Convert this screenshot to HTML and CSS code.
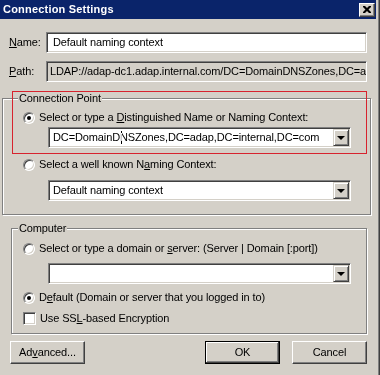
FILE: index.html
```html
<!DOCTYPE html>
<html>
<head>
<meta charset="utf-8">
<link rel="stylesheet" href="styles.css">
</head>
<body>
<div class="window">
  <div class="titlebar">
    <span class="title">Connection Settings</span>
    <span class="close"><svg width="8" height="7" viewBox="0 0 8 7"><path d="M0 0h2l2 2 2-2h2v1l-2.5 2.5 2.5 2.5v1h-2l-2-2-2 2h-2v-1l2.5-2.5-2.5-2.5z" fill="#000"/></svg></span>
  </div>
  <div class="client">
    <div class="field-row">
      <label class="lbl"><u>N</u>ame:</label>
      <div class="edit name-edit">Default naming context</div>
    </div>
    <div class="field-row path-row">
      <label class="lbl"><u>P</u>ath:</label>
      <div class="edit disabled">LDAP://adap-dc1.adap.internal.com/DC=DomainDNSZones,DC=adap,DC=internal,DC=com</div>
    </div>

    <fieldset class="group g1">
      <legend>Connection Point</legend>
      <div class="group-body">
        <div class="option"><span class="radio checked"></span><span>Select or type a <u>D</u>istinguished Name or Naming Context:</span></div>
        <div class="combo first-combo"><span class="combo-text">DC=DomainD<span class="cursor-n">N</span>SZones,DC=adap,DC=internal,DC=com</span><span class="drop"><span class="arrow"></span></span></div>
        <div class="option gap"><span class="radio"></span><span>Select a well known N<u>a</u>ming Context:</span></div>
        <div class="combo combo-b"><span class="combo-text">Default naming context</span><span class="drop"><span class="arrow"></span></span></div>
      </div>
    </fieldset>

    <fieldset class="group g2">
      <legend>Computer</legend>
      <div class="group-body body2">
        <div class="option"><span class="radio"></span><span>Select or type a domain or <u>s</u>erver: (Server | Domain [:port])</span></div>
        <div class="combo combo-c"><span class="combo-text"></span><span class="drop"><span class="arrow"></span></span></div>
        <div class="option gap2"><span class="radio checked"></span><span>D<u>e</u>fault (Domain or server that you logged in to)</span></div>
        <div class="option gap3"><span class="check"></span><span>Use SS<u>L</u>-based Encryption</span></div>
      </div>
    </fieldset>

    <div class="buttons">
      <div class="btn">Ad<u>v</u>anced...</div>
      <div class="btn default ok">OK</div>
      <div class="btn cancel">Cancel</div>
    </div>
  </div>
  <div class="redbox"></div>
</div>
</body>
</html>
```
FILE: styles.css
```css
* { box-sizing: border-box; }
html, body { margin: 0; padding: 0; }
body {
  width: 380px;
  height: 375px;
  overflow: hidden;
  background: #d4d0c8;
  font-family: "Liberation Sans", Arial, sans-serif;
  font-size: 11px;
  line-height: 13px;
  letter-spacing: -0.12px;
  color: #000;
}
u { text-decoration: underline; text-underline-offset: 1px; }

.window {
  position: relative;
  width: 380px;
  height: 375px;
  padding-right: 4px;
  display: flex;
  flex-direction: column;
  box-shadow: inset -1px 0 0 #404040, inset -2px 0 0 #808080;
}

.titlebar {
  height: 19px;
  background: #0a246a;
  color: #fff;
  font-weight: bold;
  letter-spacing: 0.2px;
  display: flex;
  align-items: center;
  justify-content: space-between;
  padding: 0 1px 0 3px;
}
.close {
  width: 16px;
  height: 14px;
  background: #d4d0c8;
  border: 1px solid;
  border-color: #fff #404040 #404040 #fff;
  box-shadow: inset -1px -1px 0 #808080;
  display: flex;
  align-items: center;
  justify-content: center;
  padding-bottom: 1px;
  padding-right: 1px;
}
.close svg { display: block; }

.client {
  flex: 1;
  display: flex;
  flex-direction: column;
  padding-top: 13px;
}

.field-row {
  display: flex;
  align-items: center;
  padding-left: 9px;
  height: 21px;
}
.path-row { margin-top: 8px; }
.lbl { width: 37px; }

.edit {
  width: 321px;
  height: 21px;
  background: #fff;
  border: 1px solid;
  border-color: #808080 #fff #fff #808080;
  box-shadow: inset 1px 1px 0 #404040, inset -1px -1px 0 #d4d0c8;
  padding: 3px 2px 0 3px;
  white-space: nowrap;
  overflow: hidden;
}
.name-edit { padding-left: 6px; }
.edit.disabled { background: #d4d0c8; }

.group {
  margin: 0;
  padding: 0;
  min-inline-size: 0;
  border: 1px solid #808080;
  box-shadow: inset 1px 1px 0 #fff, 1px 1px 0 #fff;
}
.g1 {
  margin-top: 10px;
  margin-left: 2px;
  width: 369px;
}
.g2 {
  margin-top: 7px;
  margin-left: 11px;
  width: 356px;
}
.group legend {
  padding: 0 1px;
  background: #d4d0c8;
  line-height: 13px;
}
.g1 legend { margin-left: 15px; }
.g2 legend { margin-left: 6px; }
.group-body {
  display: flex;
  flex-direction: column;
}
.body1 { }
.g1 .group-body { padding: 6px 0 13px 20px; }
.g2 .group-body { padding: 7px 0 8px 11px; }

.option {
  display: flex;
  align-items: center;
  height: 13px;
  white-space: nowrap;
}
.option.gap { margin-top: 10px; }
.option.gap2 { margin-top: 7px; }
.option.gap3 { margin-top: 8px; }

.radio {
  position: relative;
  width: 12px;
  height: 12px;
  flex: none;
  border-radius: 50%;
  background: #fff;
  border: 1px solid;
  border-color: #808080 #fff #fff #808080;
  box-shadow: inset 1px 1px 0 #404040, inset -1px -1px 0 #d4d0c8;
  margin-right: 4px;
}
.radio.checked::after {
  content: "";
  position: absolute;
  left: 3px;
  top: 3px;
  width: 4px;
  height: 4px;
  border-radius: 50%;
  background: #000;
}
.check {
  width: 13px;
  height: 13px;
  flex: none;
  background: #fff;
  border: 1px solid;
  border-color: #808080 #fff #fff #808080;
  box-shadow: inset 1px 1px 0 #404040, inset -1px -1px 0 #d4d0c8;
  margin-right: 4px;
}

.combo {
  margin-left: 25px;
  width: 303px;
  height: 21px;
  background: #fff;
  border: 1px solid;
  border-color: #808080 #fff #fff #808080;
  box-shadow: inset 1px 1px 0 #404040, inset -1px -1px 0 #d4d0c8;
  padding: 1px;
  display: flex;
  align-items: center;
}
.first-combo { margin-top: 3px; }
.combo-b { margin-top: 9px; }
.combo-c { margin-top: 8px; }
.combo-text {
  flex: 1;
  padding-left: 3px;
  white-space: nowrap;
  overflow: hidden;
}
.cursor-n { position: relative; }
.cursor-n::before {
  content: "";
  position: absolute;
  left: 1px;
  top: 0;
  width: 1px;
  height: 13px;
  background: #fff;
  mix-blend-mode: difference;
}
.drop {
  width: 16px;
  height: 17px;
  background: #d4d0c8;
  border: 1px solid;
  border-color: #d4d0c8 #404040 #404040 #d4d0c8;
  box-shadow: inset 1px 1px 0 #fff, inset -1px -1px 0 #808080;
  display: flex;
  align-items: center;
  justify-content: center;
}
.arrow {
  width: 0;
  height: 0;
  border-left: 4px solid transparent;
  border-right: 4px solid transparent;
  border-top: 4px solid #000;
}

.buttons {
  display: flex;
  margin-top: 7px;
  padding: 0 9px 0 10px;
}
.btn {
  width: 75px;
  height: 23px;
  border: 1px solid;
  border-color: #fff #404040 #404040 #fff;
  box-shadow: inset -1px -1px 0 #808080;
  display: flex;
  align-items: center;
  justify-content: center;
}
.btn.default {
  border-color: #000;
  box-shadow: inset -1px -1px 0 #404040, inset 1px 1px 0 #fff, inset -2px -2px 0 #808080;
}
.ok { margin-left: auto; }
.cancel { margin-left: 12px; }

.redbox {
  position: absolute;
  left: 12px;
  top: 91px;
  width: 355px;
  height: 63px;
  border: 1px solid #d7232e;
  pointer-events: none;
}
```
